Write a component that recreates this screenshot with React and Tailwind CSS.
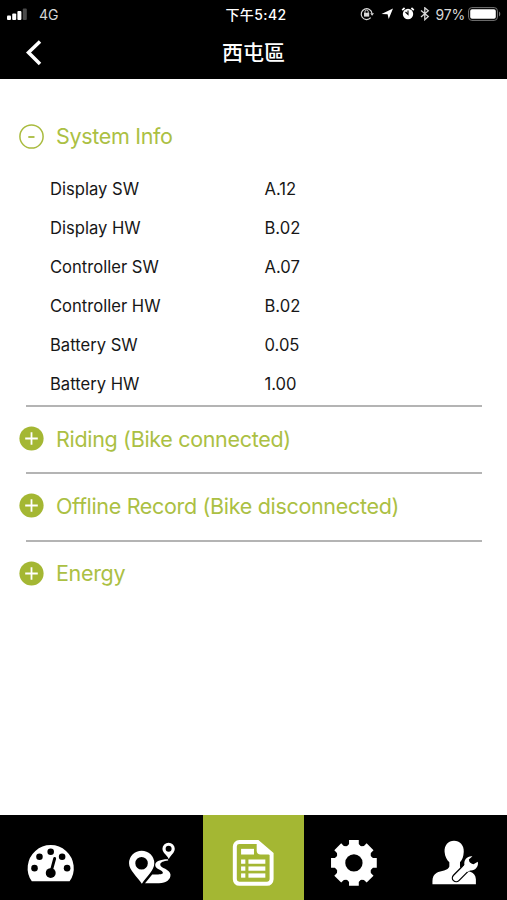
import React, { useState } from "react";

const systemInfo = [
  { label: "Display SW", value: "A.12" },
  { label: "Display HW", value: "B.02" },
  { label: "Controller SW", value: "A.07" },
  { label: "Controller HW", value: "B.02" },
  { label: "Battery SW", value: "0.05" },
  { label: "Battery HW", value: "1.00" },
];

const sections = [
  { title: "System Info", rows: systemInfo },
  { title: "Riding (Bike connected)", rows: [] },
  { title: "Offline Record (Bike disconnected)", rows: [] },
  { title: "Energy", rows: [] },
];

function StatusBar() {
  return (
    <div className="h-7 flex items-center justify-between pl-[7px] pr-[6px] text-[14px]">
      <div className="w-[160px] flex items-center">
        <svg width="20" height="13" viewBox="0 0 20 13" fill="white">
          <rect x="0" y="7.5" width="4" height="4.5" rx="1" />
          <rect x="5.2" y="5.5" width="4" height="6.5" rx="1" />
          <rect x="10.4" y="3" width="4" height="9" rx="1" />
          <rect x="15.8" y="0.5" width="4" height="11.5" rx="1" fill="#4b4b4b" />
        </svg>
        <span className="ml-[12px] text-[14px] text-[#d5d5d5]">4G</span>
      </div>
      <span className="pl-1 font-medium text-[14px] tracking-[0.4px]">下午5:42</span>
      <div className="w-[160px] flex items-center justify-end text-[#d8d8d8]">
        <svg width="14" height="14" viewBox="0 0 14 14" fill="none">
          <path
            d="M10.7 10.7A5.4 5.4 0 1 1 12 6.5"
            stroke="currentColor"
            strokeWidth="1.2"
          />
          <path d="M10.2 6.2h3.8l-1.9 2.6z" fill="currentColor" />
          <rect x="4" y="5.8" width="5.2" height="3.8" fill="currentColor" />
          <path d="M5 6V4.7a1.6 1.6 0 0 1 3.2 0V6" stroke="currentColor" />
        </svg>
        <svg className="ml-[7px]" width="13" height="12" viewBox="0 0 13 12">
          <path d="M12 0.5L7.7 11 6.6 6.3.5 6z" fill="white" />
        </svg>
        <svg className="ml-[7px]" width="14" height="14" viewBox="0 0 14 14" fill="none">
          <circle cx="7" cy="7" r="5.2" fill="white" />
          <path d="M1.2 3.2L3.6 1M12.8 3.2L10.4 1" stroke="white" strokeWidth="1.7" />
          <path d="M4.5 5L7 7.5V3.6" stroke="black" strokeWidth="1.1" />
        </svg>
        <svg className="ml-[5px]" width="10" height="14" viewBox="0 0 10 14" fill="none">
          <path
            d="M1 3.5l7.3 6.1L4.8 12.7V.8l3.5 3L1 9.900"
            stroke="currentColor"
            strokeWidth="1.3"
          />
        </svg>
        <span className="ml-[6px] text-[14px] tracking-[-0.2px]">97%</span>
        <svg className="ml-[3px] shrink-0" width="33" height="15" viewBox="0 0 33 15" fill="none">
          <rect x="0.6" y="0.6" width="28.8" height="12.8" rx="3.2" stroke="#777" />
          <rect x="2.2" y="2.2" width="25.6" height="9.6" rx="1.8" fill="white" />
          <path d="M31 4.600v5c1.800-.9 1.800-4.100 0-5z" fill="#777" />
        </svg>
      </div>
    </div>
  );
}

function ToggleIcon({ open }) {
  if (open) {
    return (
      <svg width="25" height="25" viewBox="0 0 25 25" fill="none" stroke="#a9bb3e">
        <circle cx="12.5" cy="12.5" r="11.6" strokeWidth="1.5" />
        <path d="M9.3 13h6.2" strokeWidth="1.8" />
      </svg>
    );
  }
  return (
    <svg width="25" height="25" viewBox="0 0 25 25" fill="none">
      <circle cx="12.5" cy="12.5" r="12.1" fill="#a4b733" />
      <path d="M6.2 12.5h12.6M12.5 6.2v12.6" stroke="white" strokeWidth="1.8" />
    </svg>
  );
}

function GaugeIcon() {
  return (
    <svg className="w-full h-[85px]" viewBox="0 0 102 85">
      <path d="M32 66.5A23.2 23.2 0 1 1 70 66.5z" fill="white" />
      <g fill="black">
        <circle cx="34.7" cy="53.2" r="3.3" />
        <circle cx="39.7" cy="41.7" r="3.3" />
        <circle cx="51" cy="36.7" r="3.3" />
        <circle cx="62.5" cy="41.7" r="3.3" />
        <circle cx="67.5" cy="53.2" r="3.3" />
        <circle cx="51" cy="58.2" r="5" />
      </g>
      <path d="M51.3 57L55 43.5" stroke="black" strokeWidth="2.9" strokeLinecap="round" />
    </svg>
  );
}

function RouteIcon() {
  return (
    <svg className="w-full h-[85px]" viewBox="-0.8 0 102 85" fill="white">
      <path
        fillRule="evenodd"
        d="M40.3 69C36 62 27.4 55.5 27.4 48.3a12.7 12.7 0 0 1 25.4 0C52.8 55.5 45 61.5 40.3 69zM40 42a6.3 6.3 0 1 0 0 12.6A6.3 6.3 0 0 0 40 42z"
      />
      <path
        fillRule="evenodd"
        d="M67.4 44.3C66 40.5 61 38 61 33.8a6.2 6.2 0 0 1 12.4 0C73.4 38 69 40.500 67.4 44.3zM67.200 30.8a3 3 0 1 0 0 6 3 3 0 0 0 0-6z"
      />
      <path d="M66.5 44.2C59.5 44.100 53.700 46.300 53.700 50c0 4.500 8 5 7.800 8-.2 1.500-5 1.500-10.800 1.500L43.500 68.500h14c7.500 0 11.900-4 11.600-8.800-.4-5.700-10.300-6.600-10.300-10 0-2.500 3.300-3.700 8-4.200z" />
    </svg>
  );
}

function ReportIcon() {
  return (
    <svg className="w-full h-[85px]" viewBox="0.5 0 102 85" fill="white">
      <path
        d="M55.5 27H37a4.500 4.500 0 0 0-4.500 4.500v33A4.500 4.500 0 0 0 37 69h28a4.500 4.500 0 0 0 4.500-4.500V39z"
        fill="none"
        stroke="white"
        strokeWidth="4"
      />
      <path d="M54.500 26v9.500a4 4 0 0 0 4 4h12z" />
      <rect x="38.8" y="33.8" width="13" height="5.7" />
      <rect x="38.8" y="44.5" width="4.3" height="4.3" />
      <rect x="46.2" y="44.5" width="17" height="4.3" />
      <rect x="38.8" y="51.5" width="4.3" height="4.3" />
      <rect x="46.2" y="51.5" width="17" height="4.3" />
      <rect x="38.8" y="58.500" width="4.3" height="4.3" />
      <rect x="46.2" y="58.500" width="17" height="4.3" />
    </svg>
  );
}

function GearIcon() {
  return (
    <svg className="w-full h-[85px]" viewBox="0 0 102 85">
      <g transform="translate(50.2 48)" fill="white">
        <circle r="18.6" />
        {[0, 45, 90, 135, 180, 225, 270, 315].map((angle) => (
          <path
            key={angle}
            d="M-4.900-23h9.800v3.800l1.300 1.600v3.600h-12.400v-3.600l1.300-1.600z"
            transform={`rotate(${angle})`}
          />
        ))}
        <circle r="8.700" fill="black" />
      </g>
    </svg>
  );
}

function ServiceIcon() {
  return (
    <svg className="w-full h-[85px]" viewBox="0 0 102 85" fill="white">
      <path d="M48.3 25.7c-5.8 0-9.9 4.7-9.5 11 .3 4.9 2.5 8.4 4.8 10.6v4.2c-1 4-8.700 4.300-12.600 6.300-3 1.600-4.400 4.600-4.400 8.400v3.300h43.700v-5c-.2-4.100-2.500-6.300-5-7.300-4-1.600-10-2.200-11-5.700v-4.200c2.400-2.500 3.500-5.500 3.800-10.600.4-6.300-4-11-9.800-11z" />
      <path d="M50.500 63L62 51.500" stroke="black" strokeWidth="9" strokeLinecap="round" />
      <path d="M50.500 63L63 50.500" stroke="white" strokeWidth="6.400" strokeLinecap="round" />
      <path d="M66.800 41.300c-4.900-.6-9 3.500-8 8.700l-1.500 2.500 4.500 4.500 2.600-1.400c5 .6 9-3.700 7.800-8.700l-4.300 2.400-3.800-1.200-.9-3.500z" />
    </svg>
  );
}

const tabs = [
  { id: "ride", Icon: GaugeIcon },
  { id: "route", Icon: RouteIcon },
  { id: "report", Icon: ReportIcon },
  { id: "settings", Icon: GearIcon },
  { id: "service", Icon: ServiceIcon },
];

function App() {
  const [opened, setOpened] = useState("System Info");
  const [tab, setTab] = useState("report");

  return (
    <div className="h-screen flex flex-col bg-white font-['Inter','Noto_Sans_CJK_TC',sans-serif]">
      <header className="h-[79px] shrink-0 bg-black text-white">
        <StatusBar />
        <div className="h-[50px] grid grid-cols-3 items-center">
          <button className="pl-[25px]">
            <svg width="18" height="26" viewBox="0 0 18 26" fill="none">
              <path d="M15 1.5L3.500 12.500 15 24" stroke="white" strokeWidth="3.5" />
            </svg>
          </button>
          <h1 className="text-center text-[21px] font-medium">西屯區</h1>
        </div>
      </header>

      <main className="flex-1 pt-[25px]">
        {sections.map((section, i) => {
          const open = opened === section.title;
          return (
            <section key={section.title}>
              {i > 0 && <div className="ml-[26px] mr-[25px] h-[2px] bg-[#b4b4b4]" />}
              <button
                className={`w-full flex items-center pl-[19px] text-left ${
                  open ? "h-[65px]" : "h-[65.2px] pb-[2px]"
                }`}
                onClick={() => setOpened(open ? "" : section.title)}
              >
                <ToggleIcon open={open} />
                <span className="ml-3 text-[21.5px] tracking-[-0.32px] text-[#abc043]">
                  {section.title}
                </span>
              </button>
              {open && (
                <div className="pt-[0.6px] pb-[1px]">
                  {section.rows.map((row) => (
                    <div
                      key={row.label}
                      className="h-[39.1px] flex items-center pl-[50px] text-[16.6px] text-[#171717]"
                    >
                      <span className="w-[214.5px]">{row.label}</span>
                      <span>{row.value}</span>
                    </div>
                  ))}
                </div>
              )}
            </section>
          );
        })}
      </main>

      <nav className="h-[85px] shrink-0 flex bg-black">
        {tabs.map(({ id, Icon }) => (
          <button
            key={id}
            className={`flex-1 ${tab === id ? "bg-[#a4b733]" : ""}`}
            onClick={() => setTab(id)}
          >
            <Icon />
          </button>
        ))}
      </nav>
    </div>
  );
}

export default App;
